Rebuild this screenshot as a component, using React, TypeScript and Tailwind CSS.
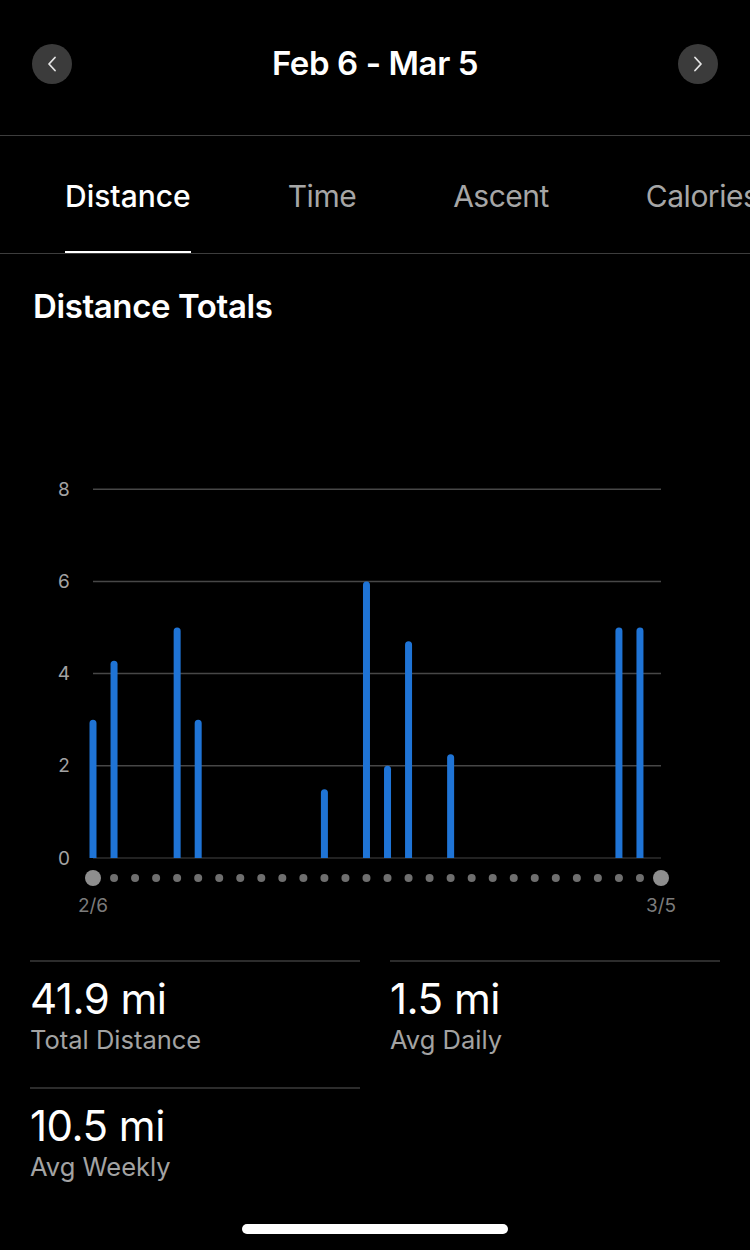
import React from "react";

const font = { fontFamily: "Inter, 'Noto Sans', 'Liberation Sans', sans-serif" };

// daily distances in miles, Feb 6 .. Mar 5 (28 days)
const days: number[] = [
  3, 4.28, 0, 0, 5, 3, 0, 0, 0, 0, 0, 1.49, 0, 6, 2, 4.7, 0, 2.25, 0, 0, 0, 0, 0, 0, 0, 5, 5, 0,
];

const X0 = 93;
const X1 = 661;
const BASE = 388;
const UNIT = 46.1;
const step = (X1 - X0) / (days.length - 1);
const yOf = (v: number) => BASE - v * UNIT;

const tabs = ["Distance", "Time", "Ascent", "Calories"];

const stats = [
  { value: "41.9 mi", label: "Total Distance" },
  { value: "1.5 mi", label: "Avg Daily" },
  { value: "10.5 mi", label: "Avg Weekly" },
];

const Chevron: React.FC<{ dir: "left" | "right" }> = ({ dir }) => (
  <svg width="24" height="24" viewBox="0 0 24 24" fill="none" stroke="#e5e5e5" strokeWidth="1.8" strokeLinecap="round" strokeLinejoin="round">
    {dir === "left" ? <path d="M15 5.5 9 12l6 6.5" /> : <path d="M9 5.5 15 12l-6 6.5" />}
  </svg>
);

const DistanceChart: React.FC = () => (
  <svg width="750" height="450" viewBox="0 0 750 450" className="block">
    {[8, 6, 4, 2].map((v) => (
      <g key={v}>
        <line x1={X0} x2={X1} y1={yOf(v)} y2={yOf(v)} stroke="#474747" strokeWidth="1.5" />
        <text x="64" y={yOf(v)} fill="#a3a3a3" fontSize="19" textAnchor="middle" dominantBaseline="central" style={font}>
          {v}
        </text>
      </g>
    ))}
    <line x1={X0} x2={X1} y1={BASE} y2={BASE} stroke="#2e2e2e" strokeWidth="1.5" />
    <text x="64" y={BASE} fill="#a3a3a3" fontSize="19" textAnchor="middle" dominantBaseline="central" style={font}>
      0
    </text>

    {days.map((v, i) => {
      if (!v) return null;
      const x = X0 + i * step;
      const top = yOf(v);
      return (
        <path
          key={i}
          d={`M${x - 3.5} ${BASE} V${top + 3.5} A3.5 3.5 0 0 1 ${x + 3.5} ${top + 3.5} V${BASE} Z`}
          fill="#1f74d6"
        />
      );
    })}

    {days.map((_, i) => {
      const big = i === 0 || i === days.length - 1;
      return <circle key={i} cx={X0 + i * step} cy={408} r={big ? 8 : 4} fill={big ? "#8e8e8e" : "#6f6f6f"} />;
    })}

    <text x={X0} y="435" fill="#7c7c7c" fontSize="19" textAnchor="middle" dominantBaseline="central" style={font}>
      2/6
    </text>
    <text x={X1} y="435" fill="#7c7c7c" fontSize="19" textAnchor="middle" dominantBaseline="central" style={font}>
      3/5
    </text>
  </svg>
);

const App: React.FC = () => {
  return (
    <div className="w-[750px] h-[1250px] bg-black text-white flex flex-col overflow-hidden" style={font}>
      {/* Date range header */}
      <div className="h-[136px] border-b border-[#3d3d3d] flex items-start justify-between px-[32px] pt-[44px]">
        <button className="w-[40px] h-[40px] rounded-full bg-[#3b3b3b] flex items-center justify-center">
          <Chevron dir="left" />
        </button>
        <div className="h-[40px] flex items-center text-[33px] font-semibold tracking-[-0.4px]">Feb 6 - Mar 5</div>
        <button className="w-[40px] h-[40px] rounded-full bg-[#3b3b3b] flex items-center justify-center">
          <Chevron dir="right" />
        </button>
      </div>

      {/* Tabs */}
      <div className="h-[118px] border-b border-[#3d3d3d] flex gap-[97px] pl-[65px] whitespace-nowrap overflow-hidden">
        {tabs.map((t, i) => (
          <div key={t} className="relative h-full flex items-center pt-[3px] shrink-0">
            <span
              className={`text-[30px] ${i === 0 ? "text-white font-medium" : "text-[#a6a6a6] tracking-[-0.5px]"}`}
            >
              {t}
            </span>
            {i === 0 && <div className="absolute left-0 right-0 bottom-0 h-[2px] bg-white" />}
          </div>
        ))}
      </div>

      {/* Chart */}
      <div className="pt-[34px]">
        <h2 className="px-[33px] text-[33px] leading-[36px] font-semibold tracking-[-0.4px]">Distance Totals</h2>
        <div className="mt-[146px]">
          <DistanceChart />
        </div>
      </div>

      {/* Stats */}
      <div className="mt-[40px] grid grid-cols-2 gap-x-[30px] px-[30px]">
        {stats.map((s) => (
          <div key={s.label} className="h-[127px] border-t-2 border-[#2c2c2c] pt-[13px]">
            <div className="text-[42px] leading-[48px] tracking-[-0.5px]">{s.value}</div>
            <div className="text-[25.5px] leading-[30px] text-[#a3a3a3] mt-[2px]">{s.label}</div>
          </div>
        ))}
      </div>

      <div className="mt-auto mb-[16px] mx-auto w-[266px] h-[10px] rounded-full bg-white" />
    </div>
  );
};

export default App;
